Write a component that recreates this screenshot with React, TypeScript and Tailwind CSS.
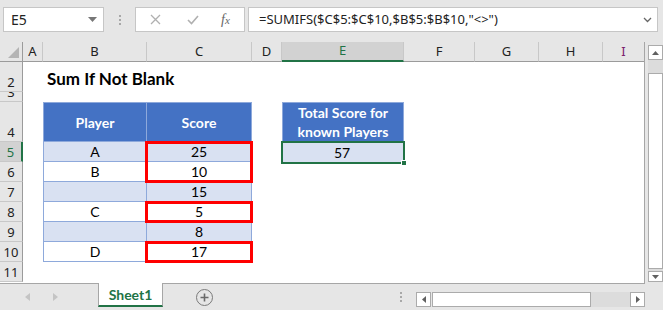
import React from "react";

const F = "font-['Lato','Open_Sans',sans-serif]";
const UI = "font-['Noto_Sans','Open_Sans',sans-serif]";

const TB = "border-[#8ea9db]";

function RowHead({ n, h, sel }: { n: string; h: string; sel?: boolean }) {
  return (
    <div
      className={`${h} w-[23px] shrink-0 flex items-end justify-center overflow-hidden border-b border-[#c8c8c8] ${
        sel ? "bg-[#d2d2d2] border-r-2 border-r-[#217346] text-[#217346]" : "bg-[#e6e6e6] border-r border-r-[#9b9b9b] text-[#222]"
      } ${UI} text-[13px] leading-[18px]`}
    >
      <span className="pb-[0px]">{n}</span>
    </div>
  );
}

function ColHead({ l, w, sel }: { l: string; w: string; sel?: boolean }) {
  return (
    <div
      className={`${w} h-[20px] shrink-0 flex items-center justify-center ${UI} text-[13px] border-r border-[#c8c8c8] ${
        sel ? "bg-[#d2d2d2] border-b-2 border-b-[#217346] text-[#217346]" : "bg-[#e6e6e6] border-b border-b-[#9b9b9b] text-[#222]"
      }`}
    >
      {l}
    </div>
  );
}

function DataRow({ n, player, score, light, sel }: { n: string; player: string; score: string; light: boolean; sel?: boolean }) {
  const bg = light ? "bg-[#d9e1f2]" : "bg-white";
  return (
    <div className="flex h-[20px]">
      <RowHead n={n} h="h-[20px]" sel={sel} />
      <div className="w-[20px] shrink-0" />
      <div className={`w-[104px] shrink-0 ${bg} border-l border-r border-b ${TB} flex items-center justify-center text-[14px] text-black ${F}`}>
        {player}
      </div>
      <div className={`w-[105px] shrink-0 ${bg} border-r border-b ${TB} flex items-center justify-center text-[14px] text-black ${F}`}>
        {score}
      </div>
    </div>
  );
}

export default function App() {
  return (
    <div className="w-[663px] h-[310px] bg-[#e6e6e6] overflow-hidden flex flex-col select-none">
      {/* Formula bar */}
      <div className="h-[42px] flex items-start pt-[7px] shrink-0">
        <div className="ml-[3px] w-[101px] h-[25px] bg-white border border-[#c6c6c6] flex items-center justify-between pl-[7px] pr-[6px]">
          <span className={`${UI} text-[14px] text-[#222]`}>E5</span>
          <svg width="9" height="6" viewBox="0 0 9 6"><path d="M0 0 L9 0 L4.5 5 Z" fill="#777" /></svg>
        </div>
        <div className="w-[31px] h-[25px] flex flex-col items-center justify-center gap-[2px]">
          <div className="w-[2px] h-[2px] bg-[#a8a8a8]" />
          <div className="w-[2px] h-[2px] bg-[#a8a8a8]" />
          <div className="w-[2px] h-[2px] bg-[#a8a8a8]" />
        </div>
        <div className="w-[110px] h-[25px] bg-white border border-[#c6c6c6] flex items-center">
          <svg className="ml-[14px]" width="11" height="11" viewBox="0 0 11 11"><path d="M1 1 L10 10 M10 1 L1 10" stroke="#b0b0b0" strokeWidth="1.3" /></svg>
          <svg className="ml-[26px]" width="12" height="10" viewBox="0 0 12 10"><path d="M1 5 L4.5 8.5 L11 1" stroke="#b0b0b0" strokeWidth="1.6" fill="none" /></svg>
          <span className="ml-[22px] font-['Liberation_Serif',serif] italic text-[14px] text-[#666] leading-none">
            f<span className="text-[11px]">x</span>
          </span>
        </div>
        <div className="ml-[3px] w-[410px] h-[25px] bg-white border border-[#c6c6c6] flex items-center justify-between pl-[10px] pr-[5px]">
          <span className={`${UI} text-[13px] text-[#222]`}>=SUMIFS($C$5:$C$10,$B$5:$B$10,"&lt;&gt;")</span>
          <svg width="9" height="6" viewBox="0 0 9 6"><path d="M1 1 L4.5 4.5 L8 1" stroke="#666" strokeWidth="1.3" fill="none" /></svg>
        </div>
      </div>

      {/* Sheet area */}
      <div className="flex h-[242px] shrink-0">
        <div className="w-[645px] h-[242px] bg-white relative border-r border-b border-[#a6a6a6]">
          {/* column headers */}
          <div className="flex h-[20px]">
            <div className="w-[23px] h-[20px] shrink-0 bg-[#e6e6e6] border-r border-b border-[#9b9b9b] relative">
              <svg className="absolute right-[3px] bottom-[3px]" width="11" height="11" viewBox="0 0 11 11"><path d="M11 0 L11 11 L0 11 Z" fill="#b4b4b4" /></svg>
            </div>
            <ColHead l="A" w="w-[20px]" />
            <ColHead l="B" w="w-[104px]" />
            <ColHead l="C" w="w-[105px]" />
            <ColHead l="D" w="w-[30px]" />
            <ColHead l="E" w="w-[122px]" sel />
            <ColHead l="F" w="w-[71px]" />
            <ColHead l="G" w="w-[64px]" />
            <ColHead l="H" w="w-[64px]" />
            <div className={`w-[41px] h-[20px] shrink-0 bg-[#e6e6e6] border-b border-b-[#9b9b9b] flex items-center justify-center ${UI} text-[13px] text-[#7a1e6e]`}>I</div>
          </div>

          {/* row 2 */}
          <div className="flex h-[30px]">
            <RowHead n="2" h="h-[30px]" />
            <div className="w-[20px] shrink-0" />
            <div className={`flex items-end pb-[3px] pl-[4px] ${F} font-bold text-[17px] text-black leading-[20px] whitespace-nowrap`}>Sum If Not Blank</div>
          </div>
          {/* row 3 */}
          <div className="flex h-[10px]">
            <div className="h-[10px] w-[23px] shrink-0 bg-[#e6e6e6] border-r border-r-[#9b9b9b] border-b border-[#c8c8c8] overflow-hidden flex justify-center">
              <span className={`${UI} text-[13px] leading-[18px] text-[#222] -mt-[9px]`}>3</span>
            </div>
          </div>
          {/* row 4 */}
          <div className="flex h-[40px]">
            <RowHead n="4" h="h-[40px]" />
            <div className="w-[20px] shrink-0" />
            <div className={`w-[104px] shrink-0 bg-[#4472c4] border-l border-t border-r border-b ${TB} flex items-center justify-center ${F} font-bold text-[14px] text-white`}>Player</div>
            <div className={`w-[105px] shrink-0 bg-[#4472c4] border-t border-r border-b ${TB} flex items-center justify-center ${F} font-bold text-[14px] text-white`}>Score</div>
            <div className="w-[30px] shrink-0" />
            <div className={`w-[122px] shrink-0 bg-[#4472c4] border ${TB} flex flex-col items-center justify-center ${F} font-bold text-[14px] leading-[19px] text-white`}>
              <span>Total Score for</span>
              <span>known Players</span>
            </div>
          </div>
          {/* rows 5-10 */}
          <div className="relative">
            <DataRow n="5" player="A" score="25" light sel />
            <div className="absolute left-[281px] top-0 w-[122px] h-[20px] bg-[#d9e1f2] flex items-center justify-center text-[14px] text-black font-['Lato',sans-serif]">57</div>
          </div>
          <DataRow n="6" player="B" score="10" light={false} />
          <DataRow n="7" player="" score="15" light />
          <DataRow n="8" player="C" score="5" light={false} />
          <DataRow n="9" player="" score="8" light />
          <DataRow n="10" player="D" score="17" light={false} />
          <div className="flex h-[20px]">
            <RowHead n="11" h="h-[20px]" />
          </div>

          {/* red highlight boxes */}
          <div className="absolute left-[145px] top-[99px] w-[108px] h-[42px] border-[3px] border-[#ff0000]" />
          <div className="absolute left-[145px] top-[159px] w-[108px] h-[22px] border-[3px] border-[#ff0000]" />
          <div className="absolute left-[145px] top-[199px] w-[108px] h-[22px] border-[3px] border-[#ff0000]" />

          {/* selection */}
          <div className="absolute left-[281px] top-[99px] w-[124px] h-[23px] border-2 border-[#217346]" />
          <div className="absolute left-[401px] top-[118px] w-[6px] h-[6px] bg-[#217346] border border-white" />
        </div>

        {/* vertical scrollbar */}
        <div className="w-[18px] h-[242px] flex flex-col items-end pr-0">
          <div className="mt-[3px] w-[15px] h-[15px] bg-white border border-[#ababab] flex items-center justify-center">
            <svg width="7" height="4" viewBox="0 0 7 4"><path d="M0 4 L3.5 0 L7 4 Z" fill="#606060" /></svg>
          </div>
          <div className="w-[15px] h-[13px] bg-[#dcdcdc]" />
          <div className="w-[15px] h-[196px] bg-white border border-[#ababab]" />
          <div className="w-[15px] h-[2px] bg-[#dcdcdc]" />
          <div className="w-[15px] h-[11px] bg-white border border-[#ababab] flex items-center justify-center">
            <svg width="7" height="4" viewBox="0 0 7 4"><path d="M0 0 L7 0 L3.5 4 Z" fill="#606060" /></svg>
          </div>
        </div>
      </div>

      {/* tab bar */}
      <div className="h-[26px] flex items-start shrink-0 relative">
        <div className="w-[98px] h-[26px] flex items-center">
          <svg className="ml-[25px]" width="5" height="8" viewBox="0 0 5 8"><path d="M5 0 L0 4 L5 8 Z" fill="#c4c4c4" /></svg>
          <svg className="ml-[23px]" width="5" height="8" viewBox="0 0 5 8"><path d="M0 0 L5 4 L0 8 Z" fill="#c4c4c4" /></svg>
        </div>
        <div className="w-[65px] h-[24px] -mt-[1px] bg-white border-l border-r border-[#a6a6a6] border-b-2 border-b-[#217346] flex items-center justify-center">
          <span className={`${F} font-bold text-[14px] text-[#217346]`}>Sheet1</span>
        </div>
        <div className="ml-[33px] mt-[5px] w-[17px] h-[17px] rounded-full border-[1.5px] border-[#7a7a7a] flex items-center justify-center">
          <svg width="9" height="9" viewBox="0 0 9 9"><path d="M4.5 0.5 V8.5 M0.5 4.5 H8.5" stroke="#6a6a6a" strokeWidth="1.6" /></svg>
        </div>
        <div className="ml-[187px] mt-[8px] flex flex-col gap-[2px]">
          <div className="w-[2px] h-[2px] bg-[#a8a8a8]" />
          <div className="w-[2px] h-[2px] bg-[#a8a8a8]" />
          <div className="w-[2px] h-[2px] bg-[#a8a8a8]" />
        </div>
        <div className="ml-[14px] mt-[8px] flex h-[15px]">
          <div className="w-[15px] h-[15px] bg-white border border-[#ababab] flex items-center justify-center">
            <svg width="4" height="7" viewBox="0 0 4 7"><path d="M4 0 L0 3.5 L4 7 Z" fill="#606060" /></svg>
          </div>
          <div className="w-[1px]" />
          <div className="w-[159px] h-[15px] bg-white border border-[#ababab]" />
          <div className="w-[39px] h-[15px] bg-[#dcdcdc]" />
          <div className="w-[15px] h-[15px] bg-white border border-[#ababab] flex items-center justify-center">
            <svg width="4" height="7" viewBox="0 0 4 7"><path d="M0 0 L4 3.5 L0 7 Z" fill="#606060" /></svg>
          </div>
        </div>
      </div>
    </div>
  );
}
